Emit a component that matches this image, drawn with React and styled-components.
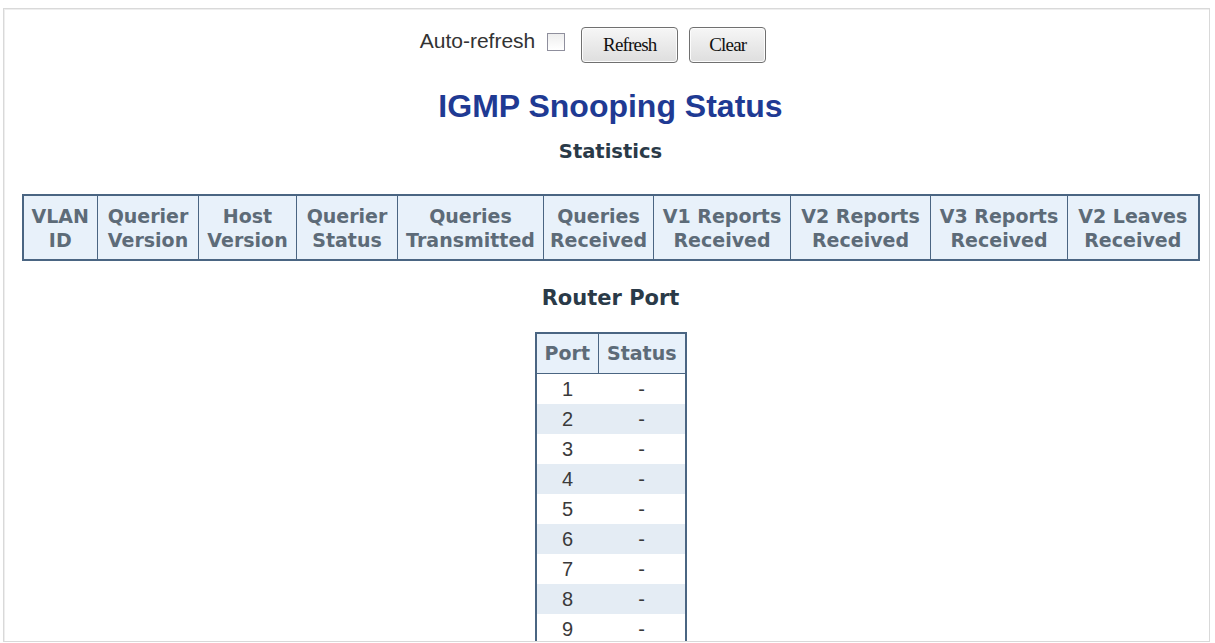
import React from "react";
import styled, { createGlobalStyle } from "styled-components";

const GlobalStyle = createGlobalStyle`
  html, body {
    margin: 0;
    padding: 0;
    background: #ffffff;
  }
`;

const statColumns = [
  ["VLAN", "ID", 75],
  ["Querier", "Version", 101],
  ["Host", "Version", 98],
  ["Querier", "Status", 101],
  ["Queries", "Transmitted", 146],
  ["Queries", "Received", 110],
  ["V1 Reports", "Received", 137],
  ["V2 Reports", "Received", 140],
  ["V3 Reports", "Received", 137],
  ["V2 Leaves", "Received", 131],
];

const ports = [1, 2, 3, 4, 5, 6, 7, 8, 9];

export default function App() {
  return (
    <>
      <GlobalStyle />
      <Frame>
        <Toolbar>
          <RefreshLabel>Auto-refresh</RefreshLabel>
          <CheckBox type="checkbox" />
          <Button $width={97}>Refresh</Button>
          <Button $width={77}>Clear</Button>
        </Toolbar>
        <Title>IGMP Snooping Status</Title>
        <SubTitle $top={15} $size={19.5}>Statistics</SubTitle>
        <StatsTable>
          <thead>
            <tr>
              {statColumns.map(([a, b, w]) => (
                <HeadCell key={a + b} $width={w}>
                  {a}
                  <br />
                  {b}
                </HeadCell>
              ))}
            </tr>
          </thead>
        </StatsTable>
        <SubTitle $top={24} $size={21}>Router Port</SubTitle>
        <PortTable>
          <thead>
            <tr>
              <PortHead $width={63}>Port</PortHead>
              <PortHead $width={87}>Status</PortHead>
            </tr>
          </thead>
          <tbody>
            {ports.map((p, i) => (
              <PortRow key={p} $striped={i % 2 === 1}>
                <PortCell>{p}</PortCell>
                <PortCell>-</PortCell>
              </PortRow>
            ))}
          </tbody>
        </PortTable>
      </Frame>
    </>
  );
}

const Frame = styled.div`
  margin: 8px 0 0 3px;
  width: 1207px;
  height: 634px;
  padding-left: 8px;
  border: 1px solid #d9d9d9;
  box-shadow: inset 1px 1px 0 #eeeeee;
  overflow: hidden;
  display: flex;
  flex-direction: column;
  align-items: center;
  box-sizing: border-box;
`;

const Toolbar = styled.div`
  display: flex;
  align-items: center;
  margin-top: 18px;
  margin-right: 35px;
  height: 36px;
`;

const RefreshLabel = styled.span`
  font-family: "Liberation Sans", Arial, sans-serif;
  font-size: 21px;
  color: #333333;
  margin-top: -8px;
`;

const CheckBox = styled.input`
  appearance: none;
  width: 18px;
  height: 18px;
  margin: -6px 16px 0 12px;
  border: 1px solid #8f8f9d;
  background: linear-gradient(#eeeeee, #ffffff);
  box-sizing: border-box;
`;

const Button = styled.button`
  width: ${(p) => p.$width}px;
  height: 36px;
  font-family: "Liberation Serif", "Times New Roman", serif;
  font-size: 19px;
  letter-spacing: -0.8px;
  color: #111111;
  border: 1px solid #707070;
  border-radius: 4px;
  background: linear-gradient(#f6f6f6, #dedede);
  box-shadow: inset 0 0 0 1px #fcfcfc;
  padding: 0;

  & + & {
    margin-left: 11px;
  }
`;

const Title = styled.h1`
  margin: 25px 0 0 0;
  font-family: "Liberation Sans", Arial, sans-serif;
  font-size: 32px;
  font-weight: bold;
  color: #1f3a93;
  line-height: 36px;
`;

const SubTitle = styled.h2`
  margin: ${(p) => p.$top}px 0 0 0;
  font-family: "DejaVu Sans", Verdana, sans-serif;
  font-size: ${(p) => p.$size}px;
  font-weight: bold;
  color: #2a3a48;
  line-height: 26px;
`;

const StatsTable = styled.table`
  margin-top: 29px;
  border-collapse: collapse;
  border: 2px solid #4a6582;
  table-layout: fixed;
`;

const HeadCell = styled.th`
  width: ${(p) => p.$width}px;
  box-sizing: border-box;
  background: #e8f1fa;
  border: 1px solid #4a6582;
  font-family: "DejaVu Sans", Verdana, sans-serif;
  font-size: 19px;
  font-weight: bold;
  color: #5d6b78;
  line-height: 24px;
  padding: 8px 0 7px 0;
  white-space: nowrap;
  text-align: center;
`;

const PortTable = styled.table`
  margin-top: 21px;
  border-collapse: collapse;
  border: 2px solid #4a6582;
  table-layout: fixed;
`;

const PortHead = styled.th`
  width: ${(p) => p.$width}px;
  height: 40px;
  box-sizing: border-box;
  background: #e8f1fa;
  border: 1px solid #4a6582;
  font-family: "DejaVu Sans", Verdana, sans-serif;
  font-size: 19px;
  font-weight: bold;
  color: #5d6b78;
  padding: 0;
  text-align: center;
`;

const PortRow = styled.tr`
  background: ${(p) => (p.$striped ? "#e4ecf4" : "#ffffff")};
  height: 30px;
`;

const PortCell = styled.td`
  font-family: "Liberation Sans", Arial, sans-serif;
  font-size: 20px;
  color: #3a3a3a;
  text-align: center;
  padding: 0;
  line-height: 30px;
`;
